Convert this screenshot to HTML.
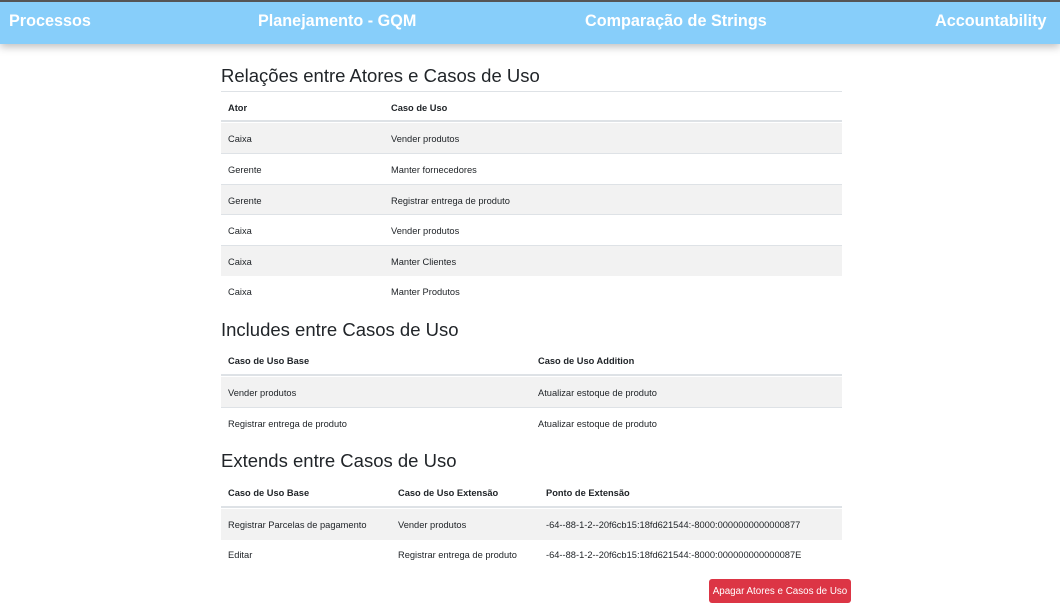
<!DOCTYPE html>
<html><head><meta charset="utf-8"><style>
*{margin:0;padding:0;box-sizing:border-box}
body{width:1060px;height:600px;overflow:hidden;background:#fff;font-family:"Liberation Sans",sans-serif;color:#212529;position:relative}
.nav{position:absolute;left:0;top:0;width:1060px;height:44px;background:#87cefa;border-top:2px solid #555;box-shadow:0 3px 8px rgba(0,0,0,.25)}
.nav span{position:absolute;top:10px;color:#fff;font-weight:bold;font-size:16.2px}
h2{position:absolute;left:221px;font-weight:normal;font-size:18.5px;color:#212529}
.r{position:absolute;left:221px;width:621px;height:31px;font-size:9.3px}
.r span{position:absolute;top:11px}
.h{font-weight:bold;border-bottom:2px solid #dee2e6}
.s{background:#f2f2f2}
.t{border-top:1px solid #dee2e6}
.btn{position:absolute;left:709px;top:579px;width:142px;height:24px;background:#dc3545;color:#fff;font-size:9.8px;border-radius:3px;text-align:center;padding-top:7px}
</style></head><body>
<div class="nav"><span style="left:9px">Processos</span><span style="left:258px">Planejamento - GQM</span><span style="left:585px">Comparação de Strings</span><span style="left:935px">Accountability</span></div>

<h2 style="top:65px">Relações entre Atores e Casos de Uso</h2>
<div class="r h t" style="top:91px"><span style="left:7px">Ator</span><span style="left:170px">Caso de Uso</span></div>
<div class="r s" style="top:123px"><span style="left:7px">Caixa</span><span style="left:170px">Vender produtos</span></div>
<div class="r t" style="top:153px"><span style="left:7px">Gerente</span><span style="left:170px">Manter fornecedores</span></div>
<div class="r s t" style="top:184px"><span style="left:7px">Gerente</span><span style="left:170px">Registrar entrega de produto</span></div>
<div class="r t" style="top:214px"><span style="left:7px">Caixa</span><span style="left:170px">Vender produtos</span></div>
<div class="r s t" style="top:245px"><span style="left:7px">Caixa</span><span style="left:170px">Manter Clientes</span></div>
<div class="r" style="top:276px"><span style="left:7px">Caixa</span><span style="left:170px">Manter Produtos</span></div>

<h2 style="top:319px">Includes entre Casos de Uso</h2>
<div class="r h" style="top:345px"><span style="left:7px">Caso de Uso Base</span><span style="left:317px">Caso de Uso Addition</span></div>
<div class="r s" style="top:377px"><span style="left:7px">Vender produtos</span><span style="left:317px">Atualizar estoque de produto</span></div>
<div class="r t" style="top:407px"><span style="left:7px">Registrar entrega de produto</span><span style="left:317px">Atualizar estoque de produto</span></div>

<h2 style="top:450px">Extends entre Casos de Uso</h2>
<div class="r h" style="top:477px"><span style="left:7px">Caso de Uso Base</span><span style="left:177px">Caso de Uso Extensão</span><span style="left:325px">Ponto de Extensão</span></div>
<div class="r s" style="top:509px"><span style="left:7px">Registrar Parcelas de pagamento</span><span style="left:177px">Vender produtos</span><span style="left:325px">-64--88-1-2--20f6cb15:18fd621544:-8000:0000000000000877</span></div>
<div class="r" style="top:539px"><span style="left:7px">Editar</span><span style="left:177px">Registrar entrega de produto</span><span style="left:325px">-64--88-1-2--20f6cb15:18fd621544:-8000:000000000000087E</span></div>

<div class="btn">Apagar Atores e Casos de Uso</div>
</body></html>
